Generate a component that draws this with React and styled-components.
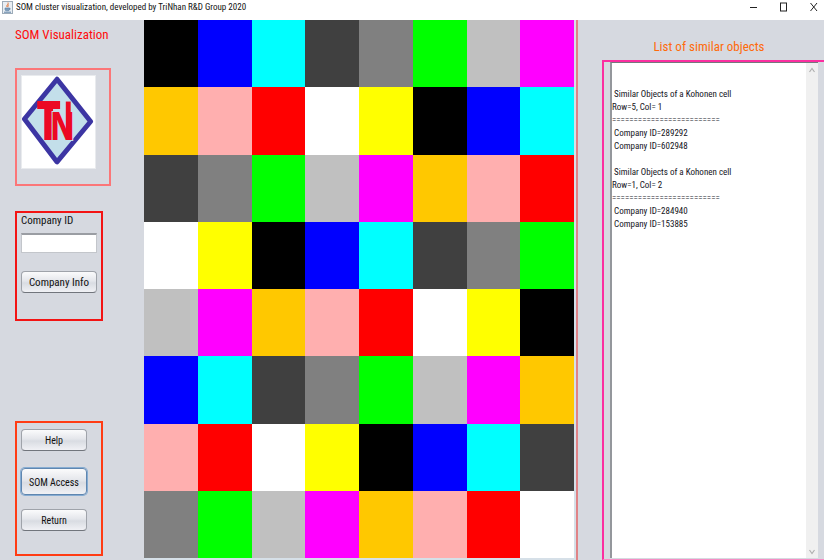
import React from "react";
import styled, { createGlobalStyle, css } from "styled-components";

const GlobalStyle = createGlobalStyle`
  * { box-sizing: border-box; }
  body {
    margin: 0;
    background: #d6d9e0;
    font-family: "Roboto Condensed", "Roboto", "Liberation Sans", sans-serif;
    color: #111;
  }
`;

const Window = styled.div`
  min-height: 100vh;
  display: flex;
  flex-direction: column;
`;

const TitleBar = styled.header`
  height: 20px;
  padding: 0 4px 6px 2px;
  display: flex;
  align-items: center;
  gap: 3px;
  background: #fff;
`;

const WindowTitle = styled.h1`
  flex: 1;
  margin: 0;
  font-size: 9px;
  line-height: 12px;
  font-weight: 400;
`;

const WindowControls = styled.div`
  display: flex;
  gap: 18px;
`;

const WindowButton = styled.button`
  width: 12px;
  height: 12px;
  padding: 0;
  border: 0;
  background: none;
  display: grid;
  place-items: center;
`;

const Content = styled.main`
  flex: 1;
  display: grid;
  grid-template-columns: 144px minmax(0, 434fr) minmax(0, 246fr);
`;

const Sidebar = styled.aside`
  padding: 0 0 4px 15px;
  display: flex;
  flex-direction: column;
  align-items: flex-start;
`;

const Heading = styled.h2`
  margin: 0;
  font-size: 13px;
  line-height: 16px;
  font-weight: 400;
  color: ${(p) => p.$color};
`;

const SidebarHeading = styled(Heading)`
  margin: 7px 0 25px;
`;

const Group = styled.section`
  width: 88px;
  display: flex;
  flex-direction: column;
  align-items: flex-start;
  border: 2px solid ${(p) => p.$color};
`;

const LogoGroup = styled(Group)`
  width: 96px;
  height: 118px;
  padding: 5px 4px;
  margin-bottom: 25px;
`;

const CompanyGroup = styled(Group)`
  height: 110px;
  padding: 0 4px;
`;

const ActionGroup = styled(Group)`
  height: 135px;
  padding: 6px 4px;
  margin-top: auto;
  gap: 14px;
`;

const FieldLabel = styled.label`
  font-size: 11px;
  line-height: 16px;
`;

const Field = styled.input`
  width: 76px;
  height: 20px;
  margin: 4px 0 18px;
  padding: 0 4px;
  border: 1px solid #c3c6cb;
  border-top: 2px solid #9a9da3;
  background: #fff;
  font: inherit;
  font-size: 11px;
`;

const PushButton = styled.button`
  width: ${(p) => p.$width}px;
  height: 22px;
  padding: 2px 0 0;
  border: 1px solid #9fa3aa;
  border-bottom-color: #71757c;
  border-radius: 4px;
  background: linear-gradient(#fbfbfc, #e4e6eb 45%, #d9dce2 55%, #f0f1f5);
  color: #111;
  font-family: inherit;
  font-size: ${(p) => (p.$small ? 10 : 11)}px;
  line-height: 16px;
  white-space: nowrap;
  ${(p) =>
    p.$focused &&
    css`
      height: 27px;
      margin-top: 3px;
      border-color: #5f86b0;
      box-shadow: 0 0 0 1px #86acd2;
    `}
`;

const MapFrame = styled.section`
  display: flex;
  padding: 0 2px 2px 0;
  border-right: 2px solid #e08386;
  background: #d6e0e8;
`;

const ClusterMap = styled.div`
  flex: 1;
  display: grid;
  grid-template-columns: repeat(8, minmax(0, 1fr));
  grid-template-rows: repeat(8, minmax(0, 1fr));
`;

const Cell = styled.div`
  background: ${(p) => p.$color};
`;

const ResultsColumn = styled.section`
  padding-left: 24px;
  display: flex;
  flex-direction: column;
`;

const ResultsHeading = styled(Heading)`
  margin: 19px 0 5px;
  padding-right: 8px;
  text-align: center;
`;

const ResultsFrame = styled.div`
  flex: 1;
  display: flex;
  padding: 0 6px 1px;
  border: 2px solid #fb2ea0;
  border-width: 2px 0 1px 2px;
  border-bottom-color: #f68dc4;
`;

const ResultsText = styled.textarea`
  flex: 1;
  min-width: 0;
  padding: 25px 0 0;
  border: 0;
  border-top: 1px solid #75787d;
  border-left: 2px solid #94979c;
  background: #fff;
  color: #14141c;
  font-family: inherit;
  font-size: 9px;
  line-height: 13px;
  resize: none;
  overflow: hidden;
  outline: 0;
`;

const ScrollTrack = styled.div`
  width: 12px;
  padding: 4px 0 3px;
  display: flex;
  flex-direction: column;
  align-items: center;
  justify-content: space-between;
  border-top: 1px solid #75787d;
  background: #f0f0f0;
`;

const palette = [
  "#000000", "#0000ff", "#00ffff", "#404040", "#808080", "#00ff00", "#c0c0c0",
  "#ff00ff", "#ffc800", "#ffafaf", "#ff0000", "#ffffff", "#ffff00",
];

const cells = Array.from({ length: 64 }, (_, i) => palette[i % palette.length]);

const rule = "=".repeat(25);
const report = [
  " Similar Objects of a Kohonen cell",
  "Row=5, Col= 1",
  rule,
  " Company ID=289292",
  " Company ID=602948",
  "",
  " Similar Objects of a Kohonen cell",
  "Row=1, Col= 2",
  rule,
  " Company ID=284940",
  " Company ID=153885",
].join("\n");

function JavaIcon() {
  return (
    <svg width="11" height="13" viewBox="0 0 11 13" aria-hidden="true">
      <rect x="0.5" y="0.5" width="10" height="12" fill="#e9eef3" stroke="#9eacb9" />
      <path d="M6 1.5C7 3 4 4 5 6M7 3.5C5.5 4.5 6 5 6 6.2" fill="none" stroke="#e2763a" />
      <path d="M3 7h4.5v1.5a1.5 1.5 0 0 1-1.5 1.3H4.4A1.5 1.5 0 0 1 3 8.500zM7.500 7.300q1.600 0 .2 1.500" fill="#7d9dbb" stroke="#5d82a6" strokeWidth="0.6" />
      <path d="M2 11.200h7" stroke="#5d82a6" />
    </svg>
  );
}

const LogoSvg = styled.svg`
  display: block;
  background: #fff;
  border: 1px solid #e9ebee;
`;

const LogoLetter = styled.text`
  font-family: "Open Sans Condensed", "Roboto Condensed", sans-serif;
  font-weight: 700;
  font-size: ${(p) => p.$size}px;
  fill: #ec0a23;
  stroke: ${(p) => p.$outline};
  stroke-width: 2px;
  paint-order: stroke;
`;

function Logo() {
  return (
    <LogoSvg width="75" height="94" viewBox="0 0 75 94" role="img" aria-label="TN">
      <path d="M36 3 70.500 46.500 36 88 2.500 44z" fill="#c3dfea" stroke="#3c35a3" strokeWidth="5" strokeLinejoin="round" />
      <LogoLetter x="16" y="64" $size={53} $outline="#ec0a23">T</LogoLetter>
      <LogoLetter x="29" y="65" $size={40} $outline="#c3dfea">N</LogoLetter>
      <rect x="45" y="26" width="5" height="39" fill="#ec0a23" />
    </LogoSvg>
  );
}

function Chevron({ down }) {
  return (
    <svg width="6" height="6" viewBox="0 0 6 6" aria-hidden="true">
      <path d={down ? "M.5 1 3 4.500 5.500 1" : "M.5 5 3 1.500 5.500 5"} fill="none" stroke="#b0b0b0" strokeWidth="1.2" />
    </svg>
  );
}

export default function App() {
  return (
    <Window>
      <GlobalStyle />
      <TitleBar>
        <JavaIcon />
        <WindowTitle>SOM cluster visualization, developed by TriNhan R&amp;D Group 2020</WindowTitle>
        <WindowControls>
          <WindowButton aria-label="Minimize">
            <svg width="8" height="8"><path d="M0 4.500h7" stroke="#222" /></svg>
          </WindowButton>
          <WindowButton aria-label="Maximize">
            <svg width="8" height="10"><rect x="0.5" y="1" width="6" height="8" fill="none" stroke="#222" /></svg>
          </WindowButton>
          <WindowButton aria-label="Close">
            <svg width="8" height="10"><path d="M.5 1 7 9M7 1 .5 9" stroke="#222" /></svg>
          </WindowButton>
        </WindowControls>
      </TitleBar>
      <Content>
        <Sidebar>
          <SidebarHeading $color="#ff0a0a">SOM Visualization</SidebarHeading>
          <LogoGroup $color="#fb7678">
            <Logo />
          </LogoGroup>
          <CompanyGroup $color="#f31414">
            <FieldLabel htmlFor="company-id">Company ID</FieldLabel>
            <Field id="company-id" type="text" />
            <PushButton $width={76}>Company Info</PushButton>
          </CompanyGroup>
          <ActionGroup $color="#ff3c14">
            <PushButton $width={66} $small>Help</PushButton>
            <PushButton $width={66} $small $focused>SOM Access</PushButton>
            <PushButton $width={66} $small>Return</PushButton>
          </ActionGroup>
        </Sidebar>
        <MapFrame>
          <ClusterMap>
            {cells.map((color, i) => (
              <Cell key={i} $color={color} />
            ))}
          </ClusterMap>
        </MapFrame>
        <ResultsColumn>
          <ResultsHeading id="results-heading" $color="#ff6a0a">List of similar objects</ResultsHeading>
          <ResultsFrame>
            <ResultsText aria-labelledby="results-heading" readOnly value={report} />
            <ScrollTrack>
              <Chevron />
              <Chevron down />
            </ScrollTrack>
          </ResultsFrame>
        </ResultsColumn>
      </Content>
    </Window>
  );
}
